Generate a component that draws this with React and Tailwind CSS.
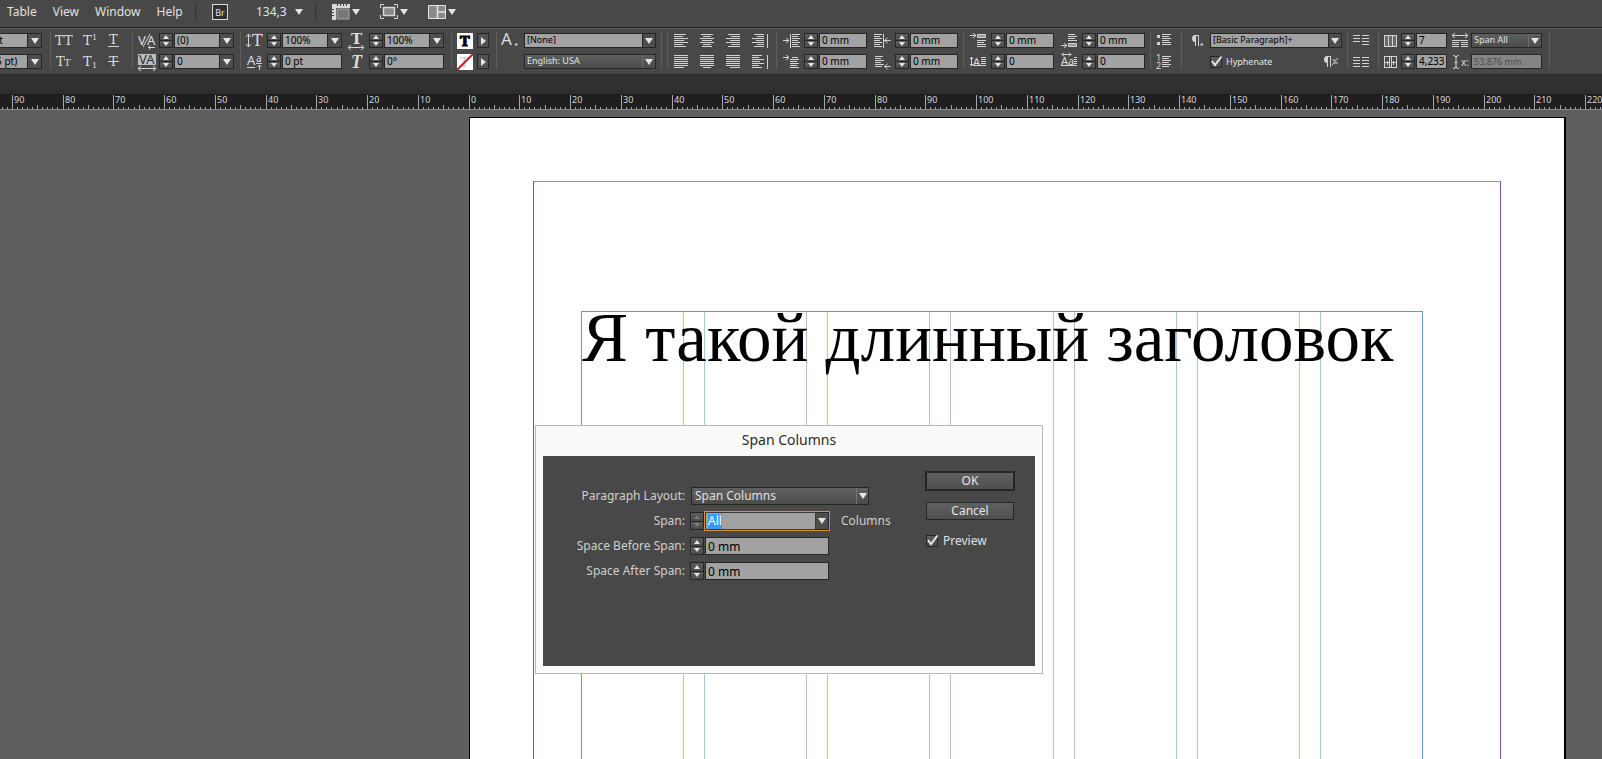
import React, { useState } from "react";

const SERIF = "font-['DejaVu_Serif','Liberation_Serif',serif]";
const SANS = "font-['Noto_Sans',sans-serif]";

/* ---------- Small controls ---------- */
function Arrow({ className = "" }) {
  return (
    <svg viewBox="0 0 8 6" className={`w-2 h-1.5 ${className}`}>
      <path d="M0 0h8L4 6z" fill="currentColor" />
    </svg>
  );
}

function Stepper({ label, disabled, tall }) {
  const cell =
    "flex-1 flex items-center justify-center border border-[#262626] bg-gradient-to-b from-[#5c5c5c] to-[#4c4c4c]";

  return (
    <span
      className={`flex flex-col w-3.5 shrink-0 ${tall ? "h-[18px]" : "h-[15px]"} ${
        disabled ? "text-[#7c7c7c]" : "text-[#e6e6e6]"
      }`}
    >
      <button type="button" disabled={disabled} aria-label={`Increase ${label}`} className={cell}>
        <svg viewBox="0 0 6 4" className="w-1.5 h-1">
          <path d="M0 4L3 0l3 4z" fill="currentColor" />
        </svg>
      </button>
      <button
        type="button"
        disabled={disabled}
        aria-label={`Decrease ${label}`}
        className={`${cell} border-t-0`}
      >
        <svg viewBox="0 0 6 4" className="w-1.5 h-1">
          <path d="M0 0h6L3 4z" fill="currentColor" />
        </svg>
      </button>
    </span>
  );
}

function Field({ label, value, className = "w-12", disabled }) {
  return (
    <input
      aria-label={label}
      defaultValue={value}
      disabled={disabled}
      className={`h-[15px] min-w-0 shrink-0 border border-[#262626] px-0.5 pb-px leading-3 outline-none ${
        disabled ? "bg-[#848484] text-[9px] text-[#4c4c4c]" : "bg-[#a2a2a2] text-[10px] text-black"
      } ${className}`}
    />
  );
}

function Combo({ label, value, className = "w-[60px]" }) {
  return (
    <span className={`flex shrink-0 ${className}`}>
      <Field label={label} value={value} className="flex-1" />
      <button
        type="button"
        aria-label={`${label} presets`}
        className="-ml-px flex h-[15px] w-[15px] items-center justify-center border border-[#262626] bg-[#4e4e4e] text-[#e6e6e6]"
      >
        <Arrow />
      </button>
    </span>
  );
}

function Select({ label, options, className, light }) {
  return (
    <span className={`relative block shrink-0 ${className}`}>
      <select
        aria-label={label}
        className={`block h-[15px] w-full appearance-none border border-[#262626] pb-px pl-0.5 text-[9px] leading-3 outline-none ${
          light ? "bg-[#a2a2a2] text-black" : "bg-gradient-to-b from-[#5e5e5e] to-[#4c4c4c] text-[#e4e4e4]"
        }`}
      >
        {options.map((o) => (
          <option key={o}>{o}</option>
        ))}
      </select>
      <span
        className={`pointer-events-none absolute right-px top-px flex h-[13px] w-[13px] items-center justify-center border-l text-[#e6e6e6] ${
          light ? "border-[#262626] bg-[#4e4e4e]" : "border-[#6c6c6c]"
        }`}
      >
        <Arrow />
      </span>
    </span>
  );
}

function Check({ id, checked, onChange }) {
  return (
    <span className="relative block h-3 w-3 shrink-0">
      <input
        id={id}
        type="checkbox"
        checked={checked}
        onChange={onChange}
        className="block h-3 w-3 appearance-none border border-[#262626] bg-gradient-to-b from-[#5c5c5c] to-[#4c4c4c]"
      />
      {checked && (
        <svg viewBox="0 0 12 12" className="pointer-events-none absolute left-0 top-0 h-3 w-3 overflow-visible">
          <path d="M2 5l3 4 6.500-8.500" fill="none" stroke="#e8e8e8" strokeWidth="2" />
        </svg>
      )}
    </span>
  );
}

/* ---------- Icons ---------- */
function Icon({ w = 16, children, className = "" }) {
  return (
    <svg
      width={w}
      height="16"
      viewBox={`0 0 ${w} 16`}
      fill="none"
      stroke="#d4d4d4"
      className={`shrink-0 overflow-visible ${className}`}
    >
      {children}
    </svg>
  );
}

function Glyph({ x = 0, y = 12, size = 13, children, fill = "#dcdcdc", className = SERIF }) {
  return (
    <text x={x} y={y} fontSize={size} fill={fill} stroke="none" className={className}>
      {children}
    </text>
  );
}

// rows is a list of [x, width], one stroke every two pixels
function Lines({ rows, y = 1 }) {
  return (
    <path
      shapeRendering="crispEdges"
      d={rows.map(([x, w], i) => `M${x} ${y + i * 2 + 0.5}h${w}`).join("")}
    />
  );
}

function ArrowRight({ x, y }) {
  return <path d={`M${x} ${y}h6M${x + 3} ${y - 2.5}l3 2.5l-3 2.5`} />;
}

function ArrowLeft({ x, y }) {
  return <path d={`M${x} ${y}h6M${x + 3} ${y - 2.5}l-3 2.5l3 2.5`} />;
}

function Pilcrow() {
  return (
    <>
      <path d="M5.500 9a3.500 3.500 0 010-7z" fill="#d4d4d4" stroke="none" />
      <path d="M4 2.500h5M5.500 2v11M8.500 2v11" />
    </>
  );
}

const left = [[0, 12], [0, 9], [0, 14], [0, 10], [0, 14], [0, 9], [0, 12]];
const center = [[1, 12], [3, 8], [0, 14], [2, 10], [0, 14], [3, 8], [2, 10]];
const right = [[2, 12], [5, 9], [0, 14], [4, 10], [0, 14], [5, 9], [2, 12]];
const full = [[0, 14], [0, 14], [0, 14], [0, 14], [0, 14], [0, 14], [0, 14]];
const short = [[0, 8], [0, 6], [0, 8], [0, 6], [0, 8], [0, 6], [0, 8]];

const alignTop = [
  { name: "Align left", rows: left },
  { name: "Align center", rows: center },
  { name: "Align right", rows: right },
  { name: "Align away from spine", rows: right.map(([x, w]) => [x, Math.max(w - 2, 2)]), bar: true },
];

const alignBottom = [
  { name: "Justify left", rows: [...full.slice(0, 6), [0, 10]] },
  { name: "Justify center", rows: [...full.slice(0, 6), [3, 8]] },
  { name: "Justify right", rows: [...full.slice(0, 6), [4, 10]] },
  { name: "Align towards spine", rows: left.map(([x, w]) => [x, w - 2]), bar: true },
];

/* ---------- Control panel ---------- */
function Group({ className = "", children }) {
  return (
    <div className={`flex h-[37px] shrink-0 flex-col gap-1.5 border-r border-[#5f5f5f] pt-px ${className}`}>
      {children}
    </div>
  );
}

function Row({ className = "", children }) {
  return <div className={`flex h-[15px] items-center ${className}`}>{children}</div>;
}

function AlignRow({ items }) {
  return (
    <Row className="gap-3">
      {items.map((item) => (
        <button key={item.name} type="button" aria-label={item.name}>
          <Icon w={14}>
            <Lines rows={item.rows} />
            {item.bar && <path d="M15.5 1v14" />}
          </Icon>
        </button>
      ))}
    </Row>
  );
}

function IconField({ icon, label, value, className }) {
  return (
    <span className="flex items-center">
      {icon}
      <span className="ml-[5px] flex gap-px">
        <Stepper label={label} />
        <Field label={label} value={value} className={className} />
      </span>
    </span>
  );
}

function ControlPanel() {
  const [hyphenate, setHyphenate] = useState(true);

  return (
    <div className="flex h-12 items-start overflow-hidden border-b border-t border-b-[#2a2a2a] border-t-[#262626] bg-[#484848] pt-1 shadow-[inset_0_1px_0_#5c5c5c]">
      <Group className="w-[51px]">
        <Row className="-ml-6">
          <Combo label="Font size" value="12 pt" className="w-[66px]" />
        </Row>
        <Row className="-ml-6">
          <Combo label="Leading" value="(14,5 pt)" className="w-[66px]" />
        </Row>
      </Group>

      <Group className="w-[82px] pl-1">
        <Row className="gap-2.5">
          <Icon w={17}><Glyph size={13}>TT</Glyph></Icon>
          <Icon w={15}><Glyph x={1} size={13}>T</Glyph><Glyph x={10} y={7} size={8}>1</Glyph></Icon>
          <Icon w={12}><Glyph x={2} y={11} size={13}>T</Glyph><path d="M1 13.500h11" /></Icon>
        </Row>
        <Row className="gap-2.5">
          <Icon w={17}><Glyph x={1} size={13}>T</Glyph><Glyph x={9} size={10}>T</Glyph></Icon>
          <Icon w={15}><Glyph x={1} size={13}>T</Glyph><Glyph x={10} y={14} size={8}>1</Glyph></Icon>
          <Icon w={12}><Glyph x={2} size={13}>T</Glyph><path d="M1 7.500h11" /></Icon>
        </Row>
      </Group>

      <Group className="w-[108px] pl-[5px]">
        <Row>
          <Icon w={18}>
            <Glyph size={13} className={SANS}>V</Glyph>
            <Glyph x={9} size={13} className={SANS}>A</Glyph>
            <path d="M5 14L12 1M10 14.500h7M12.500 12.500l-2 2 2 2" />
          </Icon>
          <span className="ml-[3px] flex gap-px">
            <Stepper label="Kerning" />
            <Combo label="Kerning" value="(0)" />
          </span>
        </Row>
        <Row>
          <Icon w={18}>
            <path d="M0 0h18v11H0z" fill="#bdbdbd" stroke="none" />
            <Glyph x={1} y={10} size={13} fill="#303030" className={SANS}>VA</Glyph>
            <path d="M0 14.500h18M3 12l-3 2.500 3 2.500M15 12l3 2.500-3 2.500" />
          </Icon>
          <span className="ml-[3px] flex gap-px">
            <Stepper label="Tracking" />
            <Combo label="Tracking" value="0" />
          </span>
        </Row>
      </Group>

      <Group className="w-[211px] pl-[5px]">
        <Row className="gap-[5px]">
          <span className="flex items-center gap-1">
            <Icon w={17}>
              <path d="M2.500 1v13M0 4l2.500-3L5 4M0 11l2.500 3L5 11" />
              <Glyph x={6} y={13} size={16}>T</Glyph>
            </Icon>
            <span className="flex gap-px">
              <Stepper label="Vertical scale" />
              <Combo label="Vertical scale" value="100%" />
            </span>
          </span>
          <span className="flex items-center gap-1">
            <Icon w={18}>
              <Glyph x={4} y={11} size={15} className="font-['DejaVu_Serif',serif] font-bold">T</Glyph>
              <path d="M1 14.500h16M4 12l-3 2.500 3 2.500M14 12l3 2.500-3 2.500" />
            </Icon>
            <span className="flex gap-px">
              <Stepper label="Horizontal scale" />
              <Combo label="Horizontal scale" value="100%" />
            </span>
          </span>
        </Row>
        <Row className="gap-[5px]">
          <span className="flex items-center gap-1">
            <Icon w={17}>
              <Glyph x={1} y={11} size={13} className={SANS}>A</Glyph>
              <Glyph x={10} y={8} size={10} className={SANS}>a</Glyph>
              <path d="M1 13.500h8M10 9.500h6M13.500 16v-5M11.500 13l2-2 2 2" />
            </Icon>
            <span className="flex gap-px">
              <Stepper label="Baseline shift" />
              <Field label="Baseline shift" value="0 pt" className="w-[60px]" />
            </span>
          </span>
          <span className="flex items-center gap-1">
            <Icon w={18}>
              <Glyph x={4} y={14} size={18} className="font-['Liberation_Serif',serif] italic font-bold">T</Glyph>
            </Icon>
            <span className="flex gap-px">
              <Stepper label="Skew" />
              <Field label="Skew" value="0°" className="w-[60px]" />
            </span>
          </span>
        </Row>
      </Group>

      <Group className="w-[45px] pl-[5px]">
        <Row className="gap-1">
          <svg width="16" height="16" viewBox="0 0 16 16" className="shrink-0">
            <path d="M0 0h16v16H0z" fill="#fff" />
            <g stroke="#000">
              <text x="3" y="13" fontSize="13" className="font-['DejaVu_Serif',serif] font-bold">T</text>
            </g>
          </svg>
          <button type="button" aria-label="Fill" className="flex h-[15px] w-3 items-center justify-center border border-[#262626] bg-[#525252]">
            <svg width="5" height="8" viewBox="0 0 5 8"><path d="M0 0l5 4-5 4z" fill="#e6e6e6" /></svg>
          </button>
        </Row>
        <Row className="gap-1">
          <svg width="16" height="16" viewBox="0 0 16 16" className="shrink-0">
            <path d="M0 0h16v16H0z" fill="#fff" />
            <Glyph x={3} y={13} size={13} fill="#c8c8b8">T</Glyph>
            <path d="M0 16L16 0" stroke="#d01826" strokeWidth="2" />
          </svg>
          <button type="button" aria-label="Stroke" className="flex h-[15px] w-3 items-center justify-center border border-[#262626] bg-[#525252]">
            <svg width="5" height="8" viewBox="0 0 5 8"><path d="M0 0l5 4-5 4z" fill="#e6e6e6" /></svg>
          </button>
        </Row>
      </Group>

      <Group className="w-[165px] pl-1">
        <Row>
          <Icon w={18}>
            <Glyph x={0} y={12} size={17} className={SANS}>A</Glyph>
            <path d="M14 11.500h2.500" strokeWidth="2" />
          </Icon>
          <Select label="Character style" options={["[None]"]} className="ml-[5px] w-[132px]" light />
        </Row>
        <Row className="pl-[23px]">
          <Select label="Language" options={["English: USA"]} className="w-[132px]" />
        </Row>
      </Group>

      <Group className="w-1.5" />

      <Group className="w-[109px] pl-1.5">
        <AlignRow items={alignTop} />
        <AlignRow items={alignBottom} />
      </Group>

      <Group className="w-[187px] pl-1.5">
        <Row className="gap-[7px]">
          <IconField
            label="Left indent"
            value="0 mm"
            icon={
              <Icon>
                <ArrowRight x={0} y={7.5} />
                <path d="M7.500 1v14" />
                <g transform="translate(9 0)"><Lines rows={short} /></g>
              </Icon>
            }
          />
          <IconField
            label="Right indent"
            value="0 mm"
            icon={
              <Icon>
                <Lines rows={short} />
                <path d="M9.500 1v14" />
                <ArrowLeft x={10.5} y={7.5} />
              </Icon>
            }
          />
        </Row>
        <Row className="gap-[7px]">
          <IconField
            label="First line left indent"
            value="0 mm"
            icon={
              <Icon>
                <ArrowRight x={0} y={3.5} />
                <Lines y={3} rows={[[9, 6], [7, 9], [7, 7], [7, 9], [7, 7], [7, 9]]} />
              </Icon>
            }
          />
          <IconField
            label="Last line right indent"
            value="0 mm"
            icon={
              <Icon>
                <Lines y={2} rows={[[1, 8], [1, 6], [1, 9], [1, 6], [1, 9], [1, 7]]} />
                <ArrowLeft x={10.5} y={12.5} />
              </Icon>
            }
          />
        </Row>
      </Group>

      <Group className="w-[187px] pl-1.5">
        <Row className="gap-[7px]">
          <IconField
            label="Space before"
            value="0 mm"
            icon={
              <Icon>
                <ArrowRight x={0} y={2.5} />
                <path d="M7.500 1.500h8v3h-8z" fill="#9a9a9a" />
                <Lines y={7} rows={[[7, 9], [7, 7], [7, 9], [7, 9]]} />
              </Icon>
            }
          />
          <IconField
            label="Space after"
            value="0 mm"
            icon={
              <Icon>
                <Lines y={1} rows={[[7, 7], [7, 9], [7, 7], [7, 9]]} />
                <path d="M7.500 10.500h8v3h-8z" fill="#9a9a9a" />
                <ArrowRight x={0} y={12.5} />
              </Icon>
            }
          />
        </Row>
        <Row className="gap-[7px]">
          <IconField
            label="Drop cap lines"
            value="0"
            icon={
              <Icon>
                <path d="M1.500 3v9M0 5l1.500-2L3 5M0 10l1.500 2L3 10" />
                <Glyph x={3} y={12} size={11} className={SANS}>A</Glyph>
                <Lines y={3} rows={[[11, 5], [11, 5], [11, 5], [11, 5], [3, 13]]} />
              </Icon>
            }
          />
          <IconField
            label="Drop cap characters"
            value="0"
            icon={
              <Icon>
                <path d="M1 .5h9M3-1.500l-2 2 2 2M8-1.500l2 2-2 2" />
                <Glyph x={0} y={11} size={11} className={SANS}>Aa</Glyph>
                <Lines y={3} rows={[[13, 3], [13, 3], [13, 3], [13, 3], [0, 16]]} />
              </Icon>
            }
          />
        </Row>
      </Group>

      <Group className="w-[31px] pl-1.5">
        <Row>
          <Icon w={14}>
            <path d="M0 3.500h3M0 10.500h3" strokeWidth="3" />
            <Lines y={1} rows={[[5, 9], [5, 7], [5, 9], [5, 7], [5, 9], [5, 9]]} />
          </Icon>
        </Row>
        <Row>
          <Icon w={14}>
            <Glyph x={-1} y={7} size={9} className={SANS}>1</Glyph>
            <Glyph x={-1} y={15} size={9} className={SANS}>2</Glyph>
            <Lines y={2} rows={[[5, 9], [5, 7], [5, 9], [5, 7], [5, 9], [5, 7]]} />
          </Icon>
        </Row>
      </Group>

      <Group className="w-[166px] pl-2">
        <Row>
          <Icon w={15}>
            <Pilcrow />
            <path d="M10.500 11.500h2.500" strokeWidth="2" />
          </Icon>
          <Select label="Paragraph style" options={["[Basic Paragraph]+"]} className="ml-[5px] w-[132px]" light />
        </Row>
        <Row className="pl-5">
          <Check id="hyphenate" checked={hyphenate} onChange={(e) => setHyphenate(e.target.checked)} />
          <label htmlFor="hyphenate" className="ml-1 text-[9px] leading-3 text-[#e4e4e4]">
            Hyphenate
          </label>
          <button type="button" aria-label="Clear overrides" className="ml-auto mr-2">
            <Icon w={17}>
              <Pilcrow />
              <path d="M10 11l6-7M10.500 6h3M12 9h4" />
            </Icon>
          </button>
        </Row>
      </Group>

      <Group className="w-[31px] pl-[5px]">
        <Row>
          <Icon w={17}>
            <path d="M0 2.500h7M0 5.500h7M0 8.500h7M9 5.500h7M9 8.500h7M9 2.500h7M9 11.500h7" shapeRendering="crispEdges" />
          </Icon>
        </Row>
        <Row>
          <Icon w={17}>
            <path d="M0 3.500h7M0 6.500h7M0 9.500h7M0 12.500h7M9 3.500h7M9 6.500h7M9 9.500h7M9 12.500h7" shapeRendering="crispEdges" />
          </Icon>
        </Row>
      </Group>

      <Group className="w-[171px] pl-[5px]">
        <Row className="gap-[3px]">
          <Icon w={14}>
            <path d="M.5 2.500h12v11H.5zM4.500 2v12M8.500 2v12" fill="#6a6a6a" shapeRendering="crispEdges" />
          </Icon>
          <span className="flex gap-px">
            <Stepper label="Number of columns" />
            <Field label="Number of columns" value="7" className="w-[31px]" />
          </span>
          <Icon w={16} className="ml-0.5">
            <path d="M0 2.500h16M3 0L0 2.500 3 5M13 0l3 2.500L13 5" />
            <path d="M0 7.500h16M0 9.500h7M9 9.500h7M0 11.500h7M9 11.500h7M0 13.500h7M9 13.500h7" shapeRendering="crispEdges" />
          </Icon>
          <Select label="Span columns" options={["Span All"]} className="w-[71px]" />
        </Row>
        <Row className="gap-[3px]">
          <Icon w={14}>
            <path d="M.5 2.500h12v11H.5zM5.500 2v12M7.500 2v12M1 8.500h4M8 8.500h4M3.500 6.500v4M9.500 6.500v4" shapeRendering="crispEdges" />
          </Icon>
          <span className="flex gap-px">
            <Stepper label="Gutter" />
            <Field label="Gutter" value="4,233 mm" className="w-[31px]" />
          </span>
          <Icon w={16} className="ml-0.5">
            <path d="M1 1.500q3 0 3 2 0-2 3-2M4 3v10M1 14.500q3 0 3-2 0 2 3 2M2.500 8.500h3" />
            <Glyph x={9} y={12} size={10} className={SANS}>x:</Glyph>
          </Icon>
          <Field label="Cursor position" value="53,876 mm" className="w-[71px]" disabled />
        </Row>
      </Group>
    </div>
  );
}

/* ---------- Menu bar ---------- */
function MenuBar() {
  return (
    <nav className="flex h-[27px] items-center bg-[#484848] pb-[3px] pl-[7px] text-xs text-[#e2e2e2]">
      <div className="flex w-[188px] gap-4">
        {["Table", "View", "Window", "Help"].map((item) => (
          <button key={item} type="button">
            {item}
          </button>
        ))}
      </div>
      <span className="h-[18px] w-px bg-[#333]" />
      <button
        type="button"
        className="ml-4 flex h-4 w-4 items-center justify-center border border-[#dadada] bg-[#303030] text-[9px] leading-none"
      >
        Br
      </button>
      <button type="button" className="ml-7 flex items-center gap-2">
        134,3
        <Arrow />
      </button>
      <span className="ml-3 h-[18px] w-px bg-[#333]" />
      <div className="ml-4 flex gap-5">
        <button type="button" aria-label="View options" className="flex items-center gap-0.5">
          <svg width="18" height="16" viewBox="0 0 18 16">
            <path d="M0 0h18v4H4v12H0z" fill="#d8d8d8" />
            <path d="M5 5h12v10H5z" fill="#777" stroke="#aaa" />
            <path d="M5.500 0v2M8.500 0v2M11.500 0v2M14.500 0v2M0 5.500h2M0 8.500h2M0 11.500h2" stroke="#444" />
          </svg>
          <Arrow />
        </button>
        <button type="button" aria-label="Screen mode" className="flex items-center gap-0.5">
          <svg width="18" height="16" viewBox="0 0 18 16" fill="none" stroke="#d8d8d8">
            <path d="M.5 4V.5H4M14 .5h3.500V4M17.500 11v3.500H14M4 14.500H.5V11" />
            <path d="M3.500 3.500h11v8h-11z" fill="#888" strokeWidth="1.500" />
          </svg>
          <Arrow />
        </button>
        <button type="button" aria-label="Arrange documents" className="flex items-center gap-0.5">
          <svg width="18" height="16" viewBox="0 0 18 16" stroke="#e4e4e4">
            <path d="M.5 1.500h17v13H.5z" fill="#8a8a8a" />
            <path d="M9.500 1.500v13M9.500 8h8" strokeWidth="1.500" />
          </svg>
          <Arrow />
        </button>
      </div>
    </nav>
  );
}

/* ---------- Ruler ---------- */
const ZERO = 469;
const PER_MM = 5.075;

function Ruler() {
  const ticks = [];
  for (let mm = -92; mm <= 400; mm++) {
    const x = Math.floor(ZERO + mm * PER_MM) + 0.5;
    const top = mm % 10 === 0 ? 1 : mm % 5 === 0 ? 11 : 13;
    ticks.push(`M${x} ${top}V16`);
  }
  const labels = [];
  for (let mm = -90; mm <= 220; mm += 10) labels.push(mm);

  return (
    <svg className="block h-4 w-full bg-[#1f1f1f]" aria-label="Horizontal ruler">
      <path d={ticks.join("")} stroke="#a8a8a8" />
      <path d="M0 15.500h4000" stroke="#8a8a8a" />
      {labels.map((mm) => (
        <text key={mm} x={Math.floor(ZERO + mm * PER_MM) + 2} y="9" fontSize="9" fill="#d6d6d6">
          {Math.abs(mm)}
        </text>
      ))}
    </svg>
  );
}

/* ---------- Document ---------- */
function DocumentPage() {
  return (
    <div className="ml-[469px] mr-9 mt-[7px] flex flex-1 flex-col border border-b-0 border-r-2 border-black bg-white px-[63px] pt-[63px]">
      <div className="flex flex-1 flex-col border border-b-0 border-x-[#7c4ab0] border-t-[#c86fd0] pl-[47px] pr-[77px] pt-[129px]">
        <div className="relative flex-1 border border-b-0 border-[#6a96c8]">
          <div className="absolute inset-0 -mx-px grid grid-cols-7 gap-x-5">
            {[0, 1, 2, 3, 4, 5, 6].map((i) => (
              <span key={i} className={`border-[#a9c6e0] ${i > 0 ? "border-l" : ""} ${i < 6 ? "border-r" : ""}`} />
            ))}
          </div>
          <h1 className="relative whitespace-nowrap font-['Liberation_Serif',serif] text-[69px] leading-[52px] text-black">
            Я такой длинный заголовок
          </h1>
        </div>
      </div>
    </div>
  );
}

/* ---------- Span Columns dialog ---------- */
function DialogRow({ id, label, children }) {
  return (
    <div className="flex h-[18px] items-center">
      <label htmlFor={id} className="w-[142px] text-right text-[#cfcfcf]">
        {label}
      </label>
      <span className="ml-[5px] flex items-center">{children}</span>
    </div>
  );
}

function SpanDialog() {
  const [preview, setPreview] = useState(true);
  const input = "ml-px h-[18px] w-[124px] border border-[#262626] bg-[#a2a2a2] px-0.5 text-black outline-none";

  return (
    <section
      role="dialog"
      aria-labelledby="dialog-title"
      className="absolute left-[535px] top-[315px] w-[508px] border border-[#b9b9b4] bg-[#fafafa] px-[7px] pb-[7px] text-xs"
    >
      <h2 id="dialog-title" className="h-[30px] text-center text-sm leading-7 text-[#2c2c2c]">
        Span Columns
      </h2>
      <div className="flex h-[210px] items-start bg-[#484848] pt-[15px]">
        <div className="flex flex-col gap-[7px] pt-4">
          <DialogRow id="layout" label="Paragraph Layout:">
            <span className="relative ml-px block w-[178px]">
              <select
                id="layout"
                className="block h-[18px] w-full appearance-none border border-[#262626] bg-gradient-to-b from-[#606060] to-[#4c4c4c] pl-[3px] text-[#e0e0e0] outline-none"
              >
                <option>Span Columns</option>
              </select>
              <span className="pointer-events-none absolute right-px top-px flex h-4 w-3 items-center justify-center border-l border-[#757575] text-[#e6e6e6]">
                <Arrow />
              </span>
            </span>
          </DialogRow>
          <DialogRow id="span" label="Span:">
            <Stepper label="Span" disabled tall />
            <span className="flex h-5 w-[126px] border border-[#d9922e] bg-[#a2a2a2]">
              <label htmlFor="span" className="flex flex-1 items-center border border-[#3a3a3a] pl-0.5">
                <input
                  id="span"
                  defaultValue="All"
                  className="h-[15px] w-[14px] bg-[#3399ff] text-white outline-none"
                />
              </label>
              <button
                type="button"
                aria-label="Span presets"
                className="flex w-[13px] items-center justify-center border border-l-0 border-[#262626] bg-[#4e4e4e] text-[#e6e6e6]"
              >
                <Arrow />
              </button>
            </span>
            <span className="ml-[11px] text-[#cfcfcf]">Columns</span>
          </DialogRow>
          <DialogRow id="before" label="Space Before Span:">
            <Stepper label="Space before span" tall />
            <input id="before" defaultValue="0 mm" className={input} />
          </DialogRow>
          <DialogRow id="after" label="Space After Span:">
            <Stepper label="Space after span" tall />
            <input id="after" defaultValue="0 mm" className={input} />
          </DialogRow>
        </div>
        <div className="ml-auto mr-5 flex w-[90px] flex-col">
          <button
            type="button"
            className="h-5 border-2 border-[#262626] bg-gradient-to-b from-[#606060] to-[#4f4f4f] leading-4 text-[#e6e6e6]"
          >
            OK
          </button>
          <button
            type="button"
            className="mx-px mt-[11px] h-[18px] border border-[#262626] bg-gradient-to-b from-[#606060] to-[#4f4f4f] leading-4 text-[#e6e6e6]"
          >
            Cancel
          </button>
          <div className="ml-px mt-[13px] flex items-center gap-[5px]">
            <Check id="preview" checked={preview} onChange={(e) => setPreview(e.target.checked)} />
            <label htmlFor="preview" className="text-[#e0e0e0]">
              Preview
            </label>
          </div>
        </div>
      </div>
    </section>
  );
}

export default function App() {
  return (
    <div className="flex h-screen flex-col overflow-hidden bg-[#5f5f5f] font-['Noto_Sans','Open_Sans',sans-serif]">
      <MenuBar />
      <ControlPanel />
      <div className="h-[19px] shrink-0 bg-gradient-to-b from-[#343434] to-[#2c2c2c]" />
      <div className="shrink-0">
        <Ruler />
      </div>
      <main className="relative flex flex-1 flex-col">
        <DocumentPage />
        <SpanDialog />
      </main>
    </div>
  );
}
